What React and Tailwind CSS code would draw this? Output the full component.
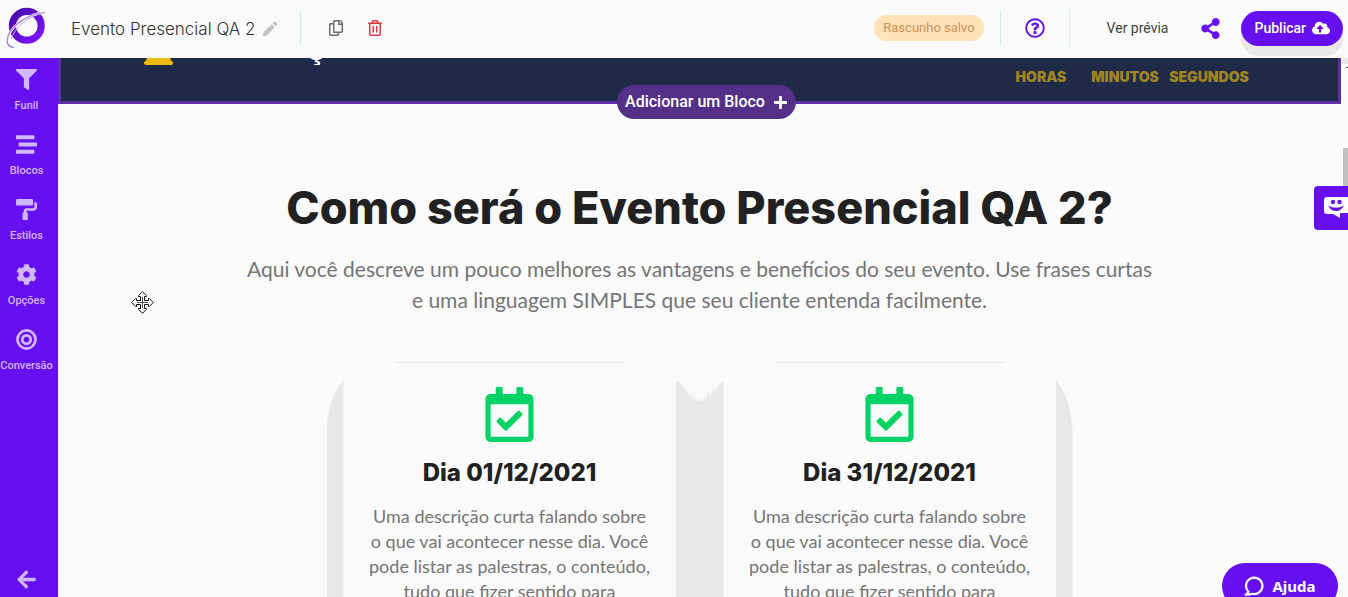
import {
  FaArrowLeft,
  FaCloudUploadAlt,
  FaCog,
  FaFilter,
  FaPaintRoller,
  FaPlus,
  FaRegCalendarCheck,
  FaRegCopy,
  FaRegQuestionCircle,
  FaShareAlt,
  FaStream,
} from 'react-icons/fa';

function TargetIcon({ size = 20, className }) {
  return (
    <svg
      viewBox="0 0 20 20"
      width={size}
      height={size}
      className={className}
      fill="none"
      stroke="currentColor"
      strokeWidth="2.600"
      aria-hidden="true"
    >
      <circle cx="10" cy="10" r="8.600" />
      <circle cx="10" cy="10" r="4" />
    </svg>
  );
}

const NAV_ITEMS = [
  { label: 'Funil', Icon: FaFilter },
  { label: 'Blocos', Icon: FaStream },
  { label: 'Estilos', Icon: FaPaintRoller },
  { label: 'Opções', Icon: FaCog },
  { label: 'Conversão', Icon: TargetIcon },
];

const COUNTDOWN_LABELS = ['HORAS', 'MINUTOS', 'SEGUNDOS'];

const DAYS = ['Dia 01/12/2021', 'Dia 31/12/2021'];

function Logo() {
  return (
    <svg viewBox="0 0 42 44" className="h-11 w-[42px]" aria-hidden="true">
      <defs>
        <linearGradient id="ring" x1="0" y1="0" x2="1" y2="1">
          <stop offset="0" stopColor="#4a0aa8" />
          <stop offset="1" stopColor="#7a14ff" />
        </linearGradient>
      </defs>
      <circle cx="21.800" cy="19.800" r="14.400" fill="none" stroke="url(#ring)" strokeWidth="7.200" />
      <path d="M40 6.500C22 8 2 22 2.500 36Q3.500 41 9 41.500" fill="none" stroke="#fafafa" strokeWidth="2.600" />
      <path d="M40 6.500C20 8 0 24 2.500 37Q3.500 41 9 41.500" fill="none" stroke="#a678e2" strokeWidth="1.200" />
      <path d="M34 8C22 12 9 22 6.500 33" fill="none" stroke="#c9aaf2" strokeWidth="1" />
    </svg>
  );
}

function PencilIcon() {
  return (
    <svg viewBox="0 0 16 16" className="size-4" fill="currentColor" aria-hidden="true">
      <path d="M.8 15.200L1.600 11.200L9.600 3.200L12.800 6.400L4.800 14.400ZM10.600 2.200L11.800 1Q12.800 .2 13.800 1L15 2.200Q15.800 3.200 15 4.200L13.800 5.400Z" />
    </svg>
  );
}

function TrashIcon() {
  return (
    <svg viewBox="0 0 14 16" className="h-4 w-3.5" fill="none" stroke="currentColor" strokeWidth="1.500" aria-hidden="true">
      <path d="M0 3.250H14M4 3L5 .8H9L10 3M1.750 3.500V14Q1.750 15.250 3 15.250H11Q12.250 15.250 12.250 14V3.500M5.250 6V12.500M8.750 6V12.500" />
    </svg>
  );
}

function ChatFaceIcon() {
  return (
    <svg viewBox="0 0 26 22" className="h-[22px] w-[26px] shrink-0" aria-hidden="true">
      <path d="M3 0H23Q26 0 26 3V13Q26 16 23 16H16V21L9 17H3Q0 17 0 14V3Q0 0 3 0Z" fill="#fff" />
      <circle cx="9" cy="5" r="2.200" fill="#6610f2" />
      <circle cx="15.500" cy="5" r="2.200" fill="#6610f2" />
      <path d="M4 8.500Q12 13 20 8.500Q17 14 12 14Q7 14 4 8.500Z" fill="#6610f2" />
    </svg>
  );
}

function BubbleIcon() {
  return (
    <svg viewBox="0 0 20 20" className="size-5" fill="none" stroke="currentColor" strokeWidth="2.200" aria-hidden="true">
      <path d="M4.500 15.800A8.200 8.200 0 1 1 8 17.800Q5.500 18.900 1.500 18.700Q4.200 17.500 4.500 15.800Z" strokeLinejoin="round" />
    </svg>
  );
}

function BellBase() {
  return (
    <svg viewBox="0 0 29 7" className="h-[7px] w-[29px]" aria-hidden="true">
      <path d="M3 0H26Q27 3 29 4V5.500Q28.500 7 27 7H2Q.5 7 0 5.500V4Q2 3 3 0Z" fill="#edbb0c" />
    </svg>
  );
}

function MoveCursor() {
  return (
    <svg
      viewBox="0 0 23 23"
      className="pointer-events-none absolute left-[131px] top-[291px] size-[23px]"
      fill="#fff"
      stroke="#111"
      aria-hidden="true"
    >
      <path d="M11.500 .7L15.500 4.700V5.500H13.500V9.500H17.500V7.500H18.300L22.300 11.500L18.300 15.500H17.500V13.500H13.500V17.500H15.500V18.300L11.500 22.300L7.500 18.300V17.500H9.500V13.500H5.500V15.500H4.700L.7 11.500L4.700 7.500H5.500V9.500H9.500V5.500H7.500V4.700Z" />
      <path d="M11.500 6V17M6 11.500H17" stroke="#555" />
    </svg>
  );
}

function TopBar() {
  return (
    <header className="flex h-[58px] shrink-0 items-center bg-[#fafafa] px-[5px] pb-0.5 font-[Roboto,sans-serif]">
      <Logo />
      <h1 className="ml-6 pt-1 font-[Inter,sans-serif] text-[17px] font-light text-[#333]">
        Evento Presencial QA 2
      </h1>
      <button type="button" aria-label="Editar nome" className="ml-1.5 pt-0.5 text-[#c4c4c4]">
        <PencilIcon />
      </button>
      <span className="ml-[22px] h-9 w-px bg-[#c8f1f5]" />
      <button type="button" aria-label="Duplicar" className="ml-[27px] text-[#6c6c6c]">
        <FaRegCopy size={16} />
      </button>
      <button type="button" aria-label="Excluir" className="ml-6 text-[#dc3545]">
        <TrashIcon />
      </button>

      <span className="ml-auto rounded-full bg-[#ffe2b8] px-[9px] py-[3px] text-[13px] leading-5 text-[#c9935a]">
        Rascunho salvo
      </span>
      <span className="ml-4 h-9 w-px bg-[#c8f1f5]" />
      <button type="button" aria-label="Ajuda" className="ml-6 text-[#6610f2]">
        <FaRegQuestionCircle size={20} />
      </button>
      <span className="ml-6 h-9 w-px bg-[#d5eeee]" />
      <a href="#previa" className="ml-[37px] text-sm text-[#444]">
        Ver prévia
      </a>
      <button type="button" aria-label="Compartilhar" className="ml-8 text-[#6610f2]">
        <FaShareAlt size={21} />
      </button>
      <button
        type="button"
        className="ml-5 flex h-[35px] items-center gap-1.5 rounded-full bg-[#6610f2] px-[13px] text-sm font-medium text-white shadow-[0_10px_0_#e8e8e8]"
      >
        Publicar
        <FaCloudUploadAlt size={18} />
      </button>
    </header>
  );
}

function SideBar() {
  return (
    <nav className="flex w-[58px] shrink-0 flex-col bg-[#6610f2] pr-[5px] font-[Roboto,sans-serif] text-[#d1b7fb]">
      {NAV_ITEMS.map(({ label, Icon }) => (
        <button
          key={label}
          type="button"
          className="flex h-[65px] shrink-0 flex-col items-center gap-2 pt-[11px] text-[11px] font-medium leading-4"
        >
          <Icon size={21} className="shrink-0" />
          {label}
        </button>
      ))}
      <button type="button" aria-label="Voltar" className="mb-[7px] mt-auto flex justify-center">
        <FaArrowLeft size={21} />
      </button>
    </nav>
  );
}

function HeroBlock() {
  return (
    <section className="mr-[7px] flex h-[46px] justify-between border-x-[3px] border-b-[3px] border-[#5d2ea6] bg-[#1f2a48] pl-[83px] pr-[87px]">
      <div className="flex h-[7px] items-end overflow-hidden">
        <BellBase />
        <span className="ml-[134px] font-[Inter,sans-serif] text-3xl font-extrabold leading-8 text-white">
          ç
        </span>
      </div>
      <ul className="grid grid-cols-[repeat(3,84px)] pt-[11px] text-center font-[Inter,sans-serif] text-sm font-black leading-4 text-[#a08522]">
        {COUNTDOWN_LABELS.map((label) => (
          <li key={label}>{label}</li>
        ))}
      </ul>
    </section>
  );
}

function DayCard({ title }) {
  return (
    <article className="flex w-[332px] flex-col items-center px-5 text-center">
      <div className="h-px w-[230px] bg-[#e8e8e8]" />
      <FaRegCalendarCheck size={55} className="mt-6 text-[#00d264]" />
      <h3 className="mt-[15px] font-[Inter,sans-serif] text-2xl font-extrabold leading-8 text-[#212121]">
        {title}
      </h3>
      <p className="mt-[15px] whitespace-nowrap font-[Lato,sans-serif] text-lg leading-[25px] text-[#757575]">
        Uma descrição curta falando sobre
        <br />o que vai acontecer nesse dia. Você
        <br />
        pode listar as palestras, o conteúdo,
        <br />
        tudo que fizer sentido para
      </p>
    </article>
  );
}

function EventSection() {
  return (
    <section className="mr-[7px] flex flex-col items-center pt-[76px] text-center shadow-[inset_2px_0_0_#f4f4f4]">
      <h2 className="font-[Inter,sans-serif] text-[45px] font-extrabold leading-[56px] text-[#212121]">
        Como será o Evento Presencial QA 2?
      </h2>
      <p className="mt-[17px] max-w-[915px] font-[Lato,sans-serif] text-[21px] leading-[31px] text-[#757575]">
        Aqui você descreve um pouco melhores as vantagens e benefícios do seu evento. Use frases
        curtas e uma linguagem SIMPLES que seu cliente entenda facilmente.
      </p>
      {/* Grey strips are the hard-edged shadows showing on either side of the cards */}
      <div className="mt-[47px] flex">
        <span className="mt-[18px] w-[17px] bg-[#e8e8e8] [clip-path:polygon(17px_0,12px_7px,8px_14px,5px_21px,3px_29px,1px_40px,0_50px,0_100%,17px_100%)]" />
        <DayCard title={DAYS[0]} />
        <span className="mt-[18px] w-12 bg-[#e8e8e8] [clip-path:polygon(0_0,4px_2px,9px_9px,10px_8px,14px_17px,15px_14px,18px_20px,19px_17px,21px_22px,22px_18px,24px_22px,26px_18px,27px_22px,29px_17px,30px_20px,33px_13px,34px_17px,38px_9px,39px_11px,48px_0,48px_100%,0_100%)]" />
        <DayCard title={DAYS[1]} />
        <span className="mt-[18px] w-[17px] bg-[#e8e8e8] [clip-path:polygon(0_0,5px_7px,9px_14px,12px_21px,14px_29px,16px_40px,17px_50px,17px_100%,0_100%)]" />
      </div>
    </section>
  );
}

function App() {
  return (
    <div className="relative flex h-screen flex-col overflow-hidden bg-[#fafafa]">
      <TopBar />
      <div className="flex min-h-0 flex-1">
        <SideBar />
        <main className="relative min-w-0 flex-1 overflow-hidden">
          <HeroBlock />
          <EventSection />
          <div className="absolute inset-x-0 top-[27px] mr-[7px] flex justify-center">
            <button
              type="button"
              className="ml-[14px] flex h-[34px] items-center gap-2 rounded-full bg-[#553089] px-2 font-[Roboto,sans-serif] text-base font-medium text-white"
            >
              Adicionar um Bloco
              <FaPlus size={15} />
            </button>
          </div>
          <span className="absolute right-0 top-0 h-1.5 w-1.5 bg-[#e8e8e8]" />
          <span className="absolute right-0 top-[9px] h-px w-0.5 bg-[#444]" />
          <span className="absolute right-0 top-[90px] h-20 w-[5px] bg-[#c1c1c1]" />
        </main>
      </div>

      <MoveCursor />
      <button
        type="button"
        aria-label="Feedback"
        className="absolute right-0 top-[186px] flex h-11 w-[34px] items-center overflow-hidden rounded-l-sm bg-[#6610f2] pl-2.5"
      >
        <ChatFaceIcon />
      </button>
      <button
        type="button"
        className="absolute -bottom-3 right-2.5 flex h-[46px] w-[116px] items-center justify-center gap-2 rounded-full bg-[#6610f2] font-['Noto_Sans',sans-serif] text-[15px] font-bold text-white"
      >
        <BubbleIcon />
        Ajuda
      </button>
    </div>
  );
}

export default App;
